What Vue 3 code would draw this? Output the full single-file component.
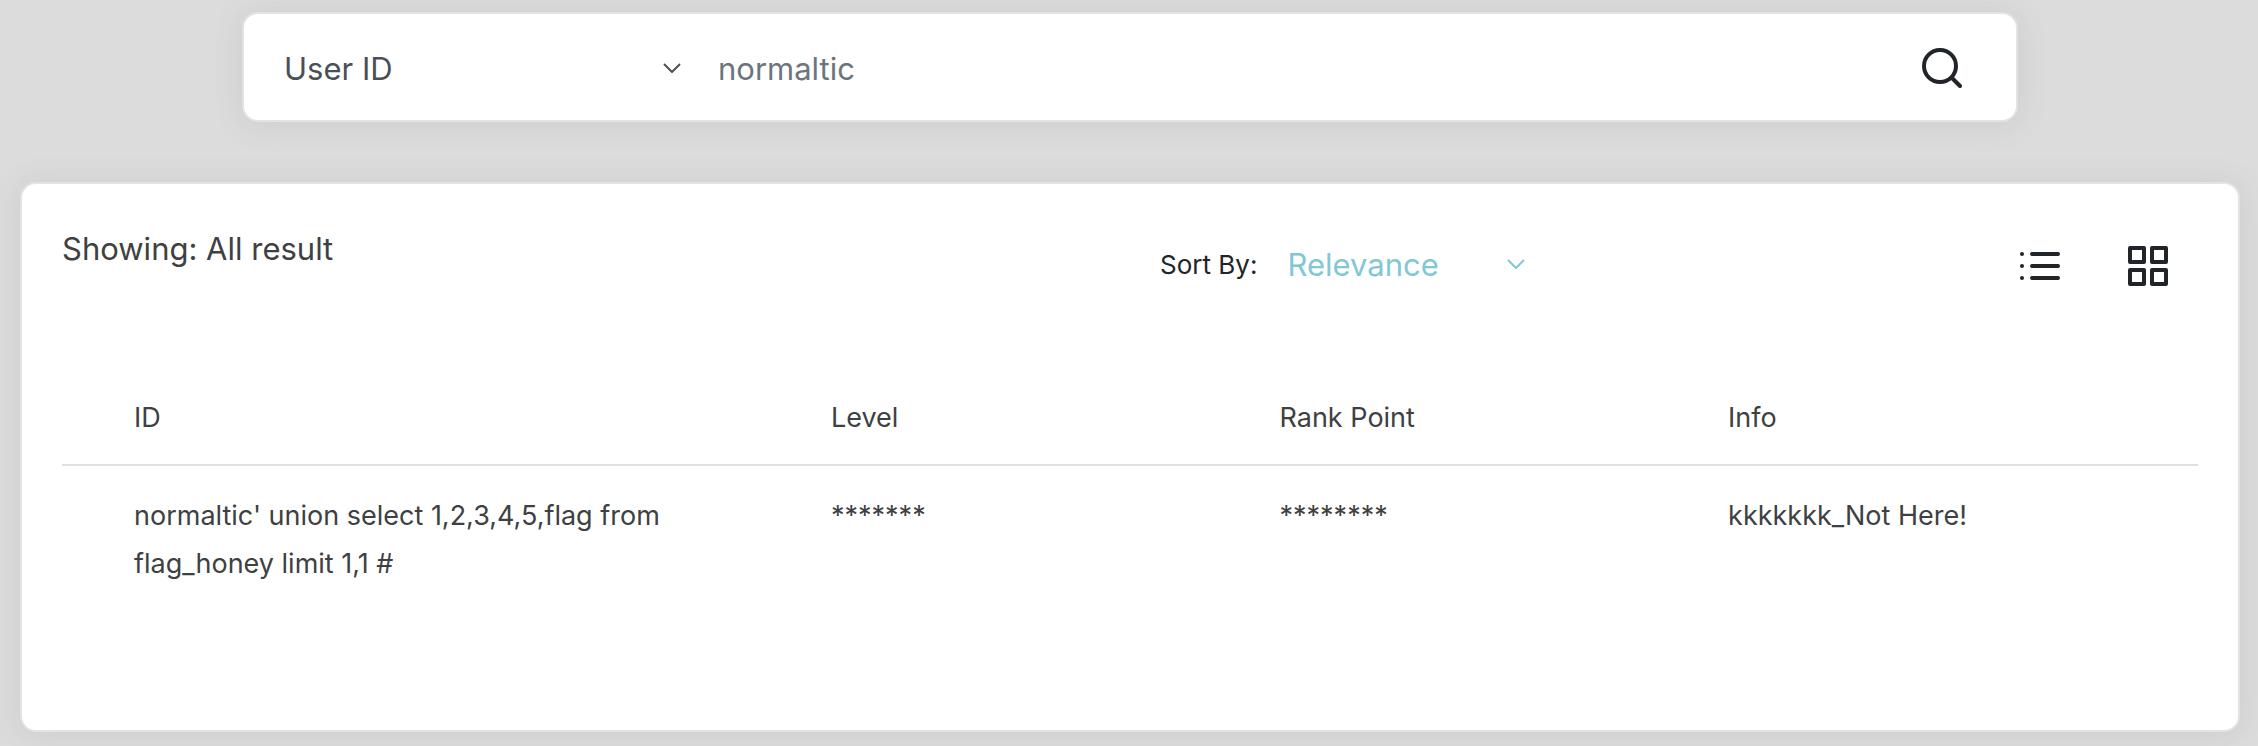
<script setup>
import { ref } from 'vue'

const field = ref('User ID')
const keyword = ref('normaltic')
const sort = ref('Relevance')
const columns = ['ID', 'Level', 'Rank Point', 'Info']
const rows = [
  ["normaltic' union select 1,2,3,4,5,flag from flag_honey limit 1,1 #", '*******', '********', 'kkkkkkk_Not Here!'],
]
</script>

<template>
  <main class="page">
    <form class="card search" role="search" @submit.prevent>
      <div class="picker field-picker">
        <select v-model="field" aria-label="Search field">
          <option>User ID</option>
        </select>
        <svg class="chevron" viewBox="0 0 18 10" aria-hidden="true"><path d="M1 1l8 8 8-8" /></svg>
      </div>
      <input v-model="keyword" class="keyword" type="text" aria-label="Search keyword" />
      <button class="icon-button" type="submit" aria-label="Search">
        <svg viewBox="0 0 40 40"><circle cx="18" cy="18" r="16" /><path d="M30 30l8 8" /></svg>
      </button>
    </form>

    <section class="card results">
      <header class="toolbar">
        <p class="summary">Showing: All result</p>
        <div class="controls">
          <div class="sort">
            <label class="sort-label" for="sort">Sort By:</label>
            <div class="picker sort-picker">
              <select id="sort" v-model="sort">
                <option>Relevance</option>
              </select>
              <svg class="chevron" viewBox="0 0 18 10" aria-hidden="true"><path d="M1 1l8 8 8-8" /></svg>
            </div>
          </div>
          <div class="views">
            <button class="icon-button" type="button" aria-label="List view">
              <svg viewBox="0 0 40 40">
                <path d="M12 8h26M12 20h26M12 32h26M2 8h.01M2 20h.01M2 32h.01" />
              </svg>
            </button>
            <button class="icon-button" type="button" aria-label="Grid view">
              <svg viewBox="0 0 40 40">
                <path d="M2 2h14v14H2zM24 2h14v14H24zM2 24h14v14H2zM24 24h14v14H24z" />
              </svg>
            </button>
          </div>
        </div>
      </header>

      <table class="table">
        <thead>
          <tr>
            <th v-for="name in columns" :key="name" scope="col">{{ name }}</th>
          </tr>
        </thead>
        <tbody>
          <tr v-for="(row, r) in rows" :key="r">
            <td v-for="(cell, c) in row" :key="c">{{ cell }}</td>
          </tr>
        </tbody>
      </table>
    </section>
  </main>
</template>

<style>
body {
  background: #dcdcdc;
}
</style>

<style scoped>
.page {
  display: flex;
  flex-direction: column;
  gap: 60px;
  padding: 12px 18px 14px 20px;
  font-family: Inter, "Liberation Sans", sans-serif;
  color: #3e4142;
}
.card {
  box-sizing: border-box;
  background: #fff;
  border: 2px solid #e3e2e8;
  border-radius: 16px;
  box-shadow: 0 2px 32px rgba(90, 90, 110, 0.12);
}
.search {
  display: flex;
  align-items: center;
  align-self: center;
  width: 80%;
  height: 110px;
  padding: 2px 54px 0 40px;
}
.picker {
  display: grid;
  align-items: center;
}
.picker > * {
  grid-area: 1 / 1;
}
select,
.keyword {
  width: 100%;
  min-width: 0;
  height: 60px;
  margin: 0;
  padding: 0;
  border: 0;
  outline: 0;
  background: transparent;
  appearance: none;
  font: inherit;
  font-size: 31px;
  color: inherit;
}
.field-picker {
  flex: none;
  width: 397px;
  margin-right: 37px;
  color: #495057;
}
.keyword {
  flex: 1;
  color: #6c757d;
}
.chevron {
  justify-self: end;
  width: 18px;
  height: 10px;
  pointer-events: none;
}
svg {
  display: block;
  fill: none;
  stroke: currentColor;
  stroke-width: 2;
}
.icon-button {
  flex: none;
  margin: 0;
  padding: 0;
  border: 0;
  background: none;
  color: #212529;
  cursor: pointer;
}
.icon-button svg {
  width: 40px;
  height: 40px;
  stroke-width: 4;
  stroke-linecap: round;
  stroke-linejoin: round;
}
.results {
  min-height: 550px;
  padding: 40px;
}
.toolbar {
  display: grid;
  grid-template-columns: 1fr 1fr;
}
.summary {
  margin: 0;
  font-size: 31px;
  line-height: 50px;
}
.controls {
  display: flex;
  align-items: flex-start;
  justify-content: space-between;
  padding: 10px 30px;
}
.sort {
  display: flex;
  align-items: center;
}
.sort-label {
  font-size: 26px;
  color: #212529;
}
.sort-picker {
  width: 238px;
  margin-left: 30px;
  color: #80c8d5;
}
.views {
  display: flex;
  gap: 68px;
  padding-top: 12px;
}
.table {
  width: 100%;
  margin-top: 66px;
  table-layout: fixed;
  border-collapse: collapse;
  font-size: 27px;
  line-height: 48px;
  text-align: left;
}
th,
td {
  padding: 0;
  font-weight: 400;
  vertical-align: top;
}
th {
  width: 21%;
  padding: 24px 0 22px;
  border-bottom: 2px solid #e0e1e6;
}
td {
  padding-top: 26px;
}
th:first-child,
td:first-child {
  width: 36%;
  box-sizing: border-box;
  padding-left: 72px;
  padding-right: 60px;
}
th:last-child {
  width: 22%;
}
</style>
